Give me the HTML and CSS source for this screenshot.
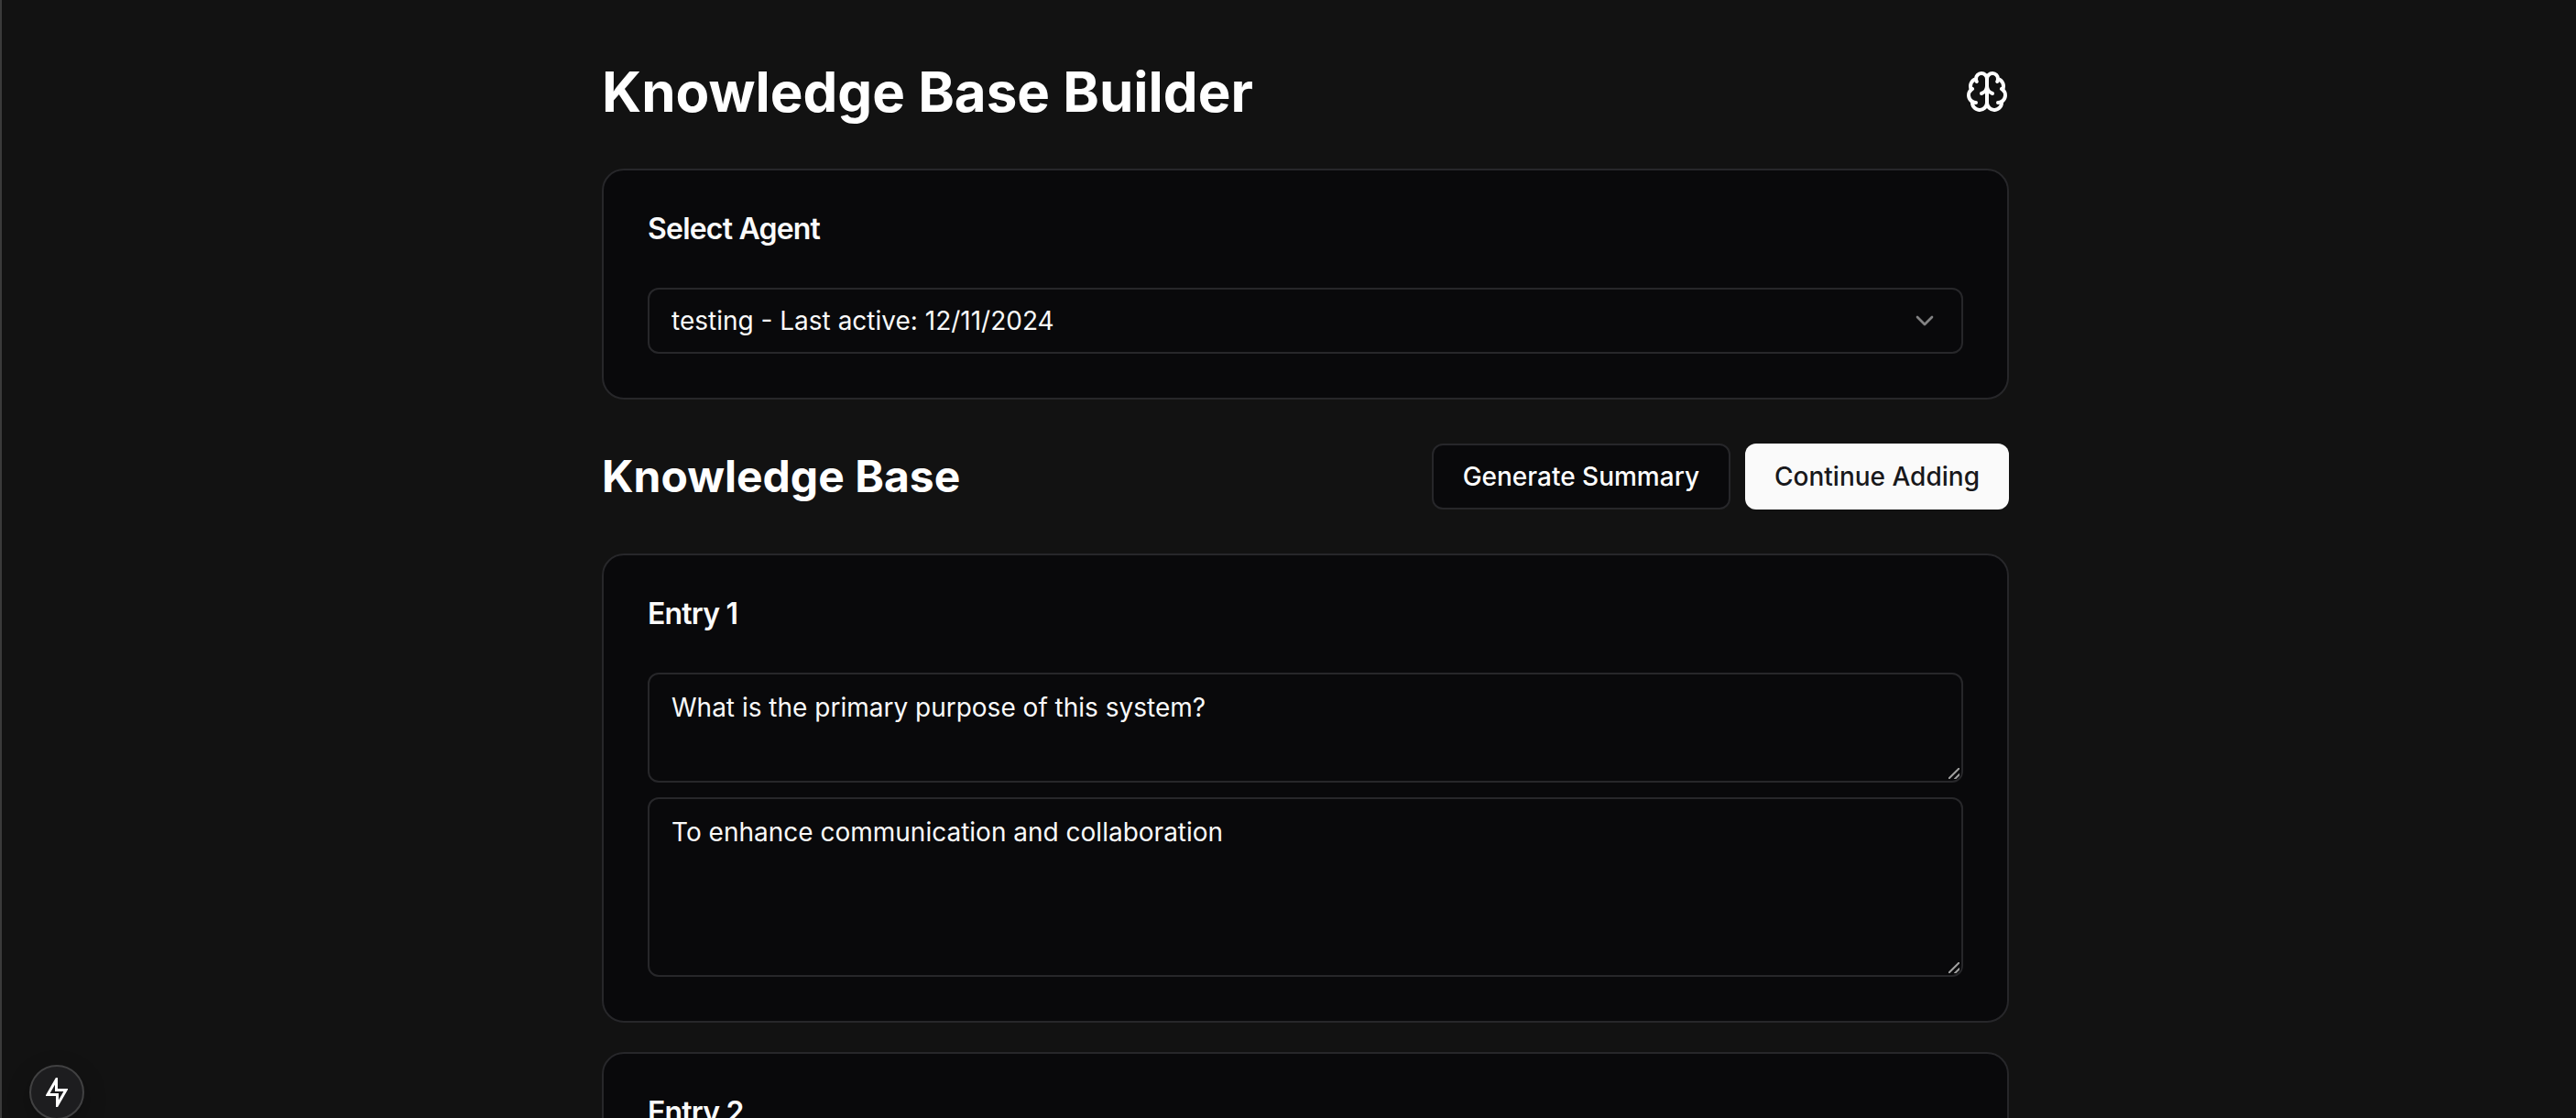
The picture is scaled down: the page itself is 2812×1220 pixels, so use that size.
FILE: index.html
```html
<!DOCTYPE html>
<html lang="en">
<head>
<meta charset="utf-8">
<meta name="viewport" content="width=device-width, initial-scale=1">
<title>Knowledge Base Builder</title>
<link rel="stylesheet" href="styles.css">
</head>
<body>
<div class="shell">
  <main class="container">
    <header class="page-header">
      <h1 class="page-title">Knowledge Base Builder</h1>
      <svg class="brain-icon" viewBox="0 0 24 24" aria-hidden="true">
        <path d="M12 5a3 3 0 1 0-5.997.125 4 4 0 0 0-2.526 5.77 4 4 0 0 0 .556 6.588A4 4 0 1 0 12 18Z"/>
        <path d="M12 5a3 3 0 1 1 5.997.125 4 4 0 0 1 2.526 5.77 4 4 0 0 1-.556 6.588A4 4 0 1 1 12 18Z"/>
        <path d="M15 13a4.500 4.500 0 0 1-3-4 4.500 4.500 0 0 1-3 4"/>
        <path d="M17.599 6.500a3 3 0 0 0 .399-1.375"/>
        <path d="M6.003 5.125A3 3 0 0 0 6.401 6.500"/>
        <path d="M3.477 10.896a4 4 0 0 1 .585-.396"/>
        <path d="M19.938 10.500a4 4 0 0 1 .585.396"/>
        <path d="M6 18a4 4 0 0 1-1.967-.516"/>
        <path d="M19.967 17.484A4 4 0 0 1 18 18"/>
      </svg>
    </header>

    <section class="card">
      <h3 class="card-title"><label for="agent">Select Agent</label></h3>
      <div class="field">
        <select class="control select" id="agent">
          <option>testing - Last active: 12/11/2024</option>
        </select>
        <svg class="chevron" viewBox="0 0 24 24" aria-hidden="true"><path d="m6 9 6 6 6-6"/></svg>
      </div>
    </section>

    <div class="section-header">
      <h2 class="section-title">Knowledge Base</h2>
      <div class="actions">
        <button class="button button-outline" type="button">Generate Summary</button>
        <button class="button button-primary" type="button">Continue Adding</button>
      </div>
    </div>

    <div class="entries">
      <section class="card">
        <h3 class="card-title" id="entry-1">Entry 1</h3>
        <div class="fields">
          <div class="field">
            <textarea class="control textarea question" aria-labelledby="entry-1">What is the primary purpose of this system?</textarea>
            <svg class="grip" viewBox="0 0 12 12" aria-hidden="true"><path d="M0 12 12 0M7 12l5-5"/></svg>
          </div>
          <div class="field">
            <textarea class="control textarea answer" aria-labelledby="entry-1">To enhance communication and collaboration</textarea>
            <svg class="grip" viewBox="0 0 12 12" aria-hidden="true"><path d="M0 12 12 0M7 12l5-5"/></svg>
          </div>
        </div>
      </section>
      <section class="card">
        <h3 class="card-title">Entry 2</h3>
      </section>
    </div>
  </main>
</div>
<button class="dev-indicator" type="button" aria-label="Route status">
  <svg class="bolt" viewBox="0 0 24 32" aria-hidden="true"><path d="M11.500 2v11.500H22L12.500 30V18.500H2Z"/></svg>
</button>
</body>
</html>
```
FILE: styles.css
```css
:root {
  --background: #121212;
  --surface: #09090b;
  --border: #27272a;
  --text: #fafafa;
}

* { box-sizing: border-box; }

html, body { height: 100%; }

body {
  margin: 0;
  overflow: hidden;
  background: var(--background);
  color: var(--text);
  font-family: Inter, "Liberation Sans", sans-serif;
  font-size: 28px;
  line-height: 40px;
}

h1, h2, h3 { margin: 0; }

svg {
  fill: none;
  stroke: currentColor;
  stroke-width: 2;
  stroke-linecap: round;
  stroke-linejoin: round;
}

.shell {
  min-height: 100%;
  padding: 64px 0 64px 36px;
  border-left: 2px solid #3a3a3a;
}

.container {
  display: flex;
  flex-direction: column;
  gap: 48px;
  max-width: 1536px;
  margin: 0 auto;
}

.page-header,
.section-header {
  display: flex;
  align-items: center;
  justify-content: space-between;
  color: #fff;
}

.page-title {
  font-size: 60px;
  font-weight: 700;
  line-height: 72px;
}

.section-title {
  font-size: 48px;
  font-weight: 700;
  line-height: 64px;
}

.brain-icon {
  width: 48px;
  height: 48px;
}

.card {
  padding: 48px;
  border: 2px solid var(--border);
  border-radius: 24px;
  background: var(--surface);
}

.card-title {
  margin-bottom: 48px;
  font-size: 32px;
  font-weight: 600;
  line-height: 32px;
  letter-spacing: -0.025em;
}

.entries {
  display: flex;
  flex-direction: column;
  gap: 32px;
}

.fields {
  display: flex;
  flex-direction: column;
  gap: 16px;
}

.field {
  position: relative;
  display: flex;
}

.control {
  width: 100%;
  border: 2px solid var(--border);
  border-radius: 12px;
  background: transparent;
  color: inherit;
  font: inherit;
}

.select {
  height: 72px;
  padding: 0 24px;
  appearance: none;
}

.textarea {
  padding: 16px 24px;
  resize: none;
  overflow: hidden;
}

.question { height: 120px; }
.answer { height: 196px; }

.chevron {
  position: absolute;
  top: 20px;
  right: 26px;
  width: 32px;
  height: 32px;
  opacity: 0.5;
  pointer-events: none;
}

.grip {
  position: absolute;
  right: 4px;
  bottom: 4px;
  width: 12px;
  height: 12px;
  color: #a0a0a0;
  pointer-events: none;
}

.actions {
  display: flex;
  gap: 16px;
}

.button {
  height: 72px;
  padding: 0 32px;
  border: 0;
  border-radius: 12px;
  font: inherit;
  font-weight: 500;
}

.button-outline {
  border: 2px solid var(--border);
  background: var(--surface);
  color: #fff;
}

.button-primary {
  background: #fafafa;
  color: #18181b;
}

.dev-indicator {
  position: fixed;
  bottom: -2px;
  left: 32px;
  display: grid;
  place-items: center;
  width: 60px;
  height: 60px;
  padding: 0;
  border: 2px solid #414142;
  border-radius: 50%;
  background: #1d1d1f;
  box-shadow: 0 8px 24px rgba(0, 0, 0, 0.25);
  color: #fff;
}

.bolt {
  width: 24px;
  height: 32px;
  stroke-width: 3;
  stroke-linejoin: miter;
}
```
